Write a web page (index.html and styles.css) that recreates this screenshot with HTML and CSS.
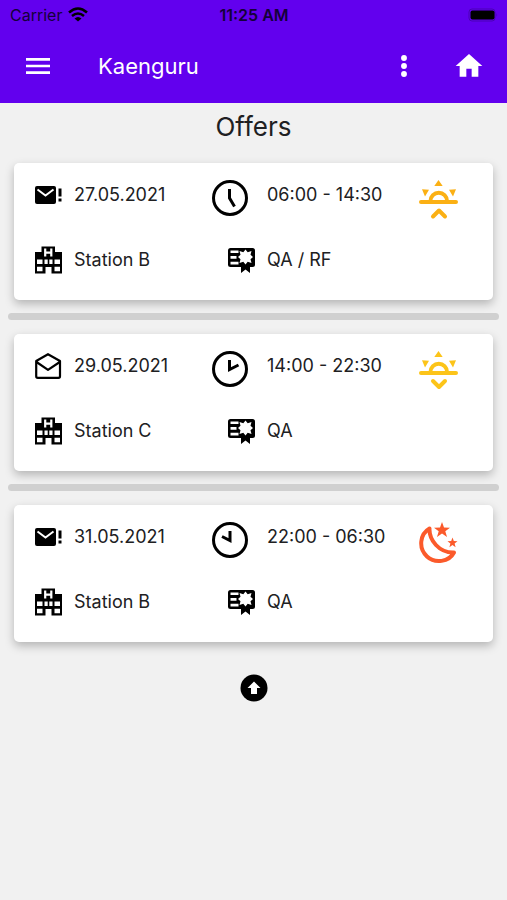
FILE: index.html
```html
<!DOCTYPE html>
<html lang="en">
<head>
    <meta charset="UTF-8">
    <meta name="viewport" content="width=device-width, initial-scale=1.0">
    <title>Kaenguru</title>
    <link rel="stylesheet" href="styles.css">
</head>
<body>
    <!-- shared icons -->
    <svg class="sprite" aria-hidden="true">
        <symbol id="mail-new" viewBox="0 0 28 28">
            <rect x="1" y="5" width="21" height="18" rx="2"/>
            <path d="M3.500 8.500L11.500 14.500L19.500 8.500" fill="none" stroke="#fff" stroke-width="2"/>
            <path d="M24.500 7.500h3v8h-3zM24.500 17.500h3v3h-3z"/>
        </symbol>
        <symbol id="mail-open" viewBox="0 0 28 28">
            <path d="M2.200 9L14 2.200L26 9V24.300Q26 25.800 24.500 25.800H3.700Q2.200 25.800 2.200 24.300ZM2.500 10L14 17.800L25.800 10" fill="none" stroke="#000" stroke-width="2.200" stroke-linejoin="round"/>
        </symbol>
        <symbol id="hospital" viewBox="0 0 28 28">
            <path d="M1 6H7.500V0.500H21V6H28V27.500H17.500V21H11.500V27.500H1Z"/>
            <path d="M11.200 2.500V10.500M17.300 2.500V10.500M11.200 6.700H17.300" stroke="#fff" stroke-width="2.200" fill="none"/>
            <path d="M3 13.500h5.500v4.500h-5.500zM10.500 13.500h3.200v4.500h-3.200zM15.300 13.500h3.200v4.500h-3.200zM20.500 13.500h5.500v4.500h-5.500zM3 20.700h5.500v4.600h-5.500zM20.500 20.700h5.500v4.600h-5.500z" fill="#fff"/>
        </symbol>
        <symbol id="certificate" viewBox="0 0 28 28">
            <rect x="1" y="2" width="27" height="19" rx="2.500"/>
            <path d="M14 16H23V27L18.500 23.500L14 27Z"/>
            <path d="M3.500 4.500h8v2.500h-8zM3.500 10h6v2.800h-6zM3.500 15.800h8v2.700h-8z" fill="#fff"/>
            <path d="M18.500 3.500L20.700 6.300L24.500 5L23.500 8.800L26 11L23.500 13.200L24.500 17L20.700 15.700L18.500 18.500L16.300 15.700L12.500 17L13.500 13.200L11 11L13.500 8.800L12.500 5L16.300 6.300Z" fill="#fff"/>
        </symbol>
        <symbol id="sun" viewBox="0 0 39 42">
            <path d="M19.500 0L23.700 6H15.300ZM3 9.200L10 9.800L6 16.500ZM37 9.200L30 9.800L34 16.500Z" fill="currentColor" stroke="none"/>
            <path d="M2 22H37M11.500 21A8.200 8.200 0 0 1 28 21" fill="none" stroke="currentColor" stroke-width="4" stroke-linecap="round"/>
        </symbol>
    </svg>

    <header class="app-header">
        <div class="status-bar">
            <div class="carrier">
                Carrier
                <svg width="20" height="15" viewBox="0 0 20 15" aria-hidden="true">
                    <path d="M1 5.500Q10-2.500 19 5.500M4 9Q10 4 16 9" fill="none" stroke="#000" stroke-width="2.500"/>
                    <path d="M6.500 11.500Q10 8.500 13.500 11.500L10 14.500Z"/>
                </svg>
            </div>
            <div class="time">11:25 AM</div>
            <svg class="battery" width="30" height="14" viewBox="0 0 30 14" aria-hidden="true">
                <rect x="1" y="1" width="26" height="12" rx="3" fill="none" stroke="#4a00b5"/>
                <rect x="2.500" y="2.500" width="24" height="9" rx="2"/>
                <path d="M28.500 5V9Q30 7 28.500 5" fill="#4a00b5"/>
            </svg>
        </div>
        <nav class="toolbar">
            <button class="icon-btn" aria-label="Menu">
                <svg viewBox="0 0 24 24"><path d="M3 18h18v-2H3v2zm0-5h18v-2H3v2zm0-7v2h18V6H3z"/></svg>
            </button>
            <span class="app-title">Kaenguru</span>
            <button class="icon-btn" aria-label="More">
                <svg viewBox="0 0 24 24"><circle cx="12" cy="6" r="2.200"/><circle cx="12" cy="12" r="2.200"/><circle cx="12" cy="18" r="2.200"/></svg>
            </button>
            <button class="icon-btn" aria-label="Home">
                <svg viewBox="0 0 24 24"><path d="M10 20v-6h4v6h5v-8h3L12 3 2 12h3v8z"/></svg>
            </button>
        </nav>
    </header>

    <main class="offers">
        <h1>Offers</h1>

        <article class="card">
            <div class="item">
                <svg class="icon"><use href="#mail-new"/></svg>
                <span>27.05.2021</span>
            </div>
            <div class="item">
                <div class="slot">
                    <svg class="clock" viewBox="0 0 36 36"><circle cx="18" cy="18" r="16.500"/><path d="M17.500 9V18L22.500 26.500"/></svg>
                </div>
                <span>06:00 - 14:30</span>
            </div>
            <svg class="shift early" viewBox="0 0 39 42">
                <use href="#sun"/>
                <path d="M14 36.500L20 30.500L26 36.500"/>
            </svg>
            <div class="item">
                <svg class="icon"><use href="#hospital"/></svg>
                <span>Station B</span>
            </div>
            <div class="item">
                <div class="slot"><svg class="icon"><use href="#certificate"/></svg></div>
                <span>QA / RF</span>
            </div>
        </article>

        <hr>

        <article class="card">
            <div class="item">
                <svg class="icon"><use href="#mail-open"/></svg>
                <span>29.05.2021</span>
            </div>
            <div class="item">
                <div class="slot">
                    <svg class="clock" viewBox="0 0 36 36"><circle cx="18" cy="18" r="16.500"/><path d="M17.500 9V18.500L26.500 14"/></svg>
                </div>
                <span>14:00 - 22:30</span>
            </div>
            <svg class="shift late" viewBox="0 0 39 42">
                <use href="#sun"/>
                <path d="M14 30L20 36L26 30"/>
            </svg>
            <div class="item">
                <svg class="icon"><use href="#hospital"/></svg>
                <span>Station C</span>
            </div>
            <div class="item">
                <div class="slot"><svg class="icon"><use href="#certificate"/></svg></div>
                <span>QA</span>
            </div>
        </article>

        <hr>

        <article class="card">
            <div class="item">
                <svg class="icon"><use href="#mail-new"/></svg>
                <span>31.05.2021</span>
            </div>
            <div class="item">
                <div class="slot">
                    <svg class="clock" viewBox="0 0 36 36"><circle cx="18" cy="18" r="16.500"/><path d="M18 9V18.500L10 14.500"/></svg>
                </div>
                <span>22:00 - 06:30</span>
            </div>
            <svg class="shift night" viewBox="0 0 39 42">
                <path d="M10.500 6.500C10 18 20 31 35 30.500C30 40 16 42 8 34.500C-1 26 1 12 10.500 6.500Z"/>
                <path class="star" d="M23 0L25 5.500L31 5.700L26.300 9.300L28 15L23 11.600L18 15L19.700 9.300L15 5.700L21 5.500ZM33.500 15.500L34.800 19L38.500 19.200L35.600 21.500L36.600 25.200L33.500 23L30.400 25.200L31.400 21.500L28.500 19.200L32.200 19Z"/>
            </svg>
            <div class="item">
                <svg class="icon"><use href="#hospital"/></svg>
                <span>Station B</span>
            </div>
            <div class="item">
                <div class="slot"><svg class="icon"><use href="#certificate"/></svg></div>
                <span>QA</span>
            </div>
        </article>

        <button class="top-btn" aria-label="Back to top">
            <svg viewBox="0 0 28 28"><circle cx="14" cy="14" r="13.500"/><path d="M14 7.500L20.500 14H17V20H11V14H7.500Z" fill="#fff"/></svg>
        </button>
    </main>
</body>
</html>
```

FILE: styles.css
```css
* {
    box-sizing: border-box;
}

body {
    margin: 0;
    min-height: 100vh;
    background: #f1f1f1;
    color: #202022;
    font-family: Inter, "Liberation Sans", sans-serif;
    font-size: 18px;
}

svg {
    display: block;
    flex-shrink: 0;
}

button {
    border: 0;
    padding: 0;
    background: none;
    cursor: pointer;
}

.sprite {
    position: absolute;
    width: 0;
    height: 0;
}

/* header */
.app-header {
    background: #6200ee;
}

.status-bar {
    display: grid;
    grid-template-columns: 1fr auto 1fr;
    align-items: center;
    height: 29px;
    padding: 0 9px 0 10px;
    color: #14003a;
    font-size: 16px;
}

.carrier {
    display: flex;
    align-items: center;
    gap: 6px;
}

.time {
    font-weight: 600;
}

.battery {
    justify-self: end;
}

.toolbar {
    display: flex;
    align-items: center;
    height: 74px;
    padding: 0 22px;
    color: #fff;
}

.app-title {
    flex: 1;
    margin-left: 44px;
    font-size: 22px;
}

.icon-btn {
    width: 32px;
    height: 32px;
}

.icon-btn svg {
    width: 32px;
    height: 32px;
    fill: #fff;
}

.icon-btn + .icon-btn {
    margin-left: 33px;
}

/* offers */
.offers {
    display: flex;
    flex-direction: column;
    padding: 0 8px;
}

h1 {
    margin: 0 0 12px;
    font-size: 26px;
    font-weight: 400;
    line-height: 48px;
    text-align: center;
}

.card {
    display: grid;
    grid-template-columns: 178fr 207fr 54fr;
    row-gap: 23px;
    margin: 0 6px;
    padding: 17px 20px 25px;
    background: #fff;
    border-radius: 5px;
    box-shadow: 0 4px 10px rgba(0, 0, 0, 0.25);
}

.item {
    display: flex;
    align-items: flex-start;
    gap: 12px;
    line-height: 30px;
    white-space: nowrap;
}

.slot {
    display: flex;
    width: 43px;
}

.icon {
    width: 28px;
    height: 30px;
}

.slot .icon {
    margin-left: auto;
}

.clock {
    width: 36px;
    height: 36px;
    fill: none;
    stroke: #000;
    stroke-width: 3;
}

.shift {
    width: 39px;
    height: 42px;
    fill: none;
    stroke: currentColor;
    stroke-width: 4;
    stroke-linecap: round;
    stroke-linejoin: round;
}

.early {
    color: #fbb014;
}

.late {
    color: #fcc419;
}

.night {
    color: #fb5a2b;
}

.star {
    fill: currentColor;
    stroke: none;
}

hr {
    width: 100%;
    height: 7px;
    margin: 13px 0 14px;
    border: 0;
    border-radius: 4px;
    background: #d0d0d0;
}

.top-btn {
    align-self: center;
    width: 28px;
    height: 28px;
    margin: 32px 0;
}
```
